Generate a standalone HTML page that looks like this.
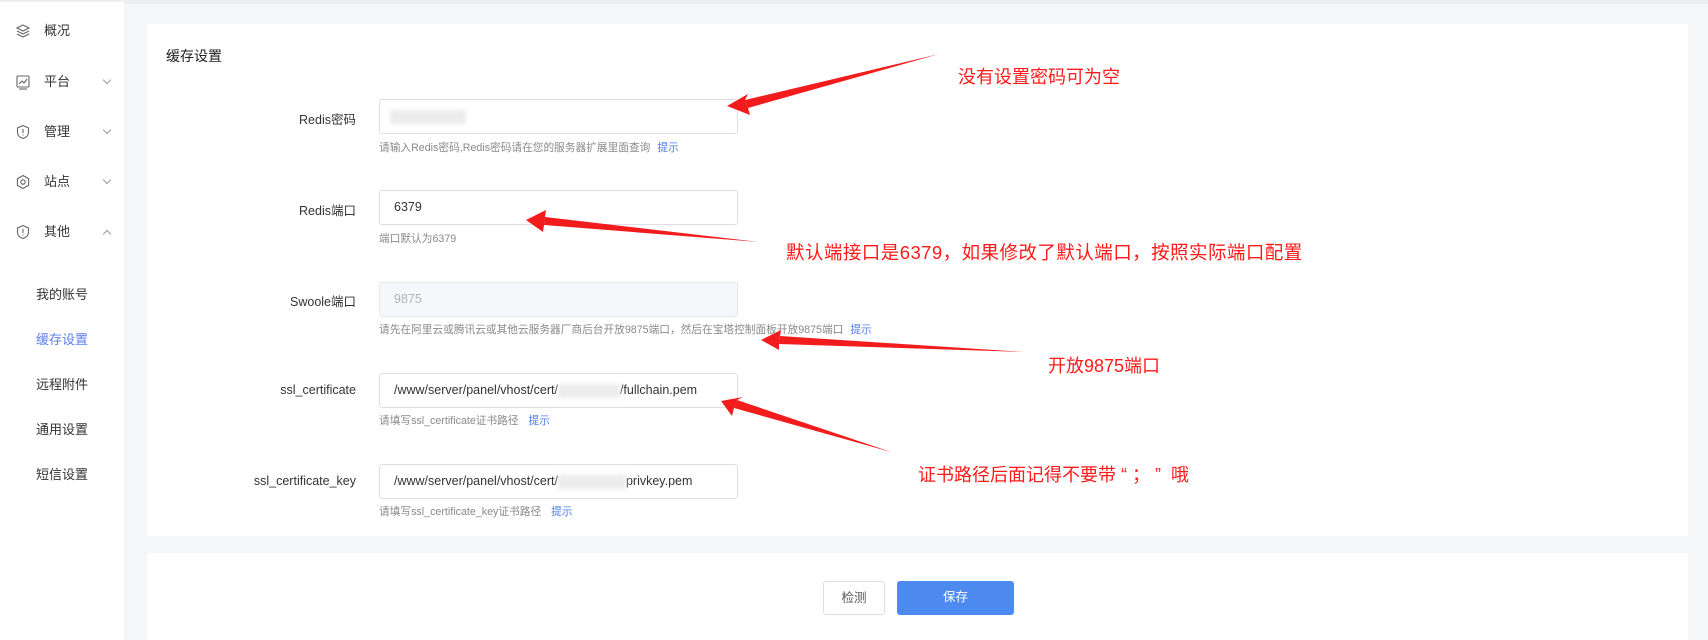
<!DOCTYPE html>
<html><head><meta charset="utf-8"><style>
*{margin:0;padding:0;box-sizing:border-box}
body{width:1708px;height:640px;overflow:hidden;background:#f5f6f8;font-family:"Liberation Sans","Noto Sans CJK SC",sans-serif;position:relative;color:#333}
.side{position:absolute;left:0;top:0;width:124px;height:640px;background:#fff;border-top:2px solid #eee}
.topline{position:absolute;left:124px;top:0;width:1584px;height:4px;background:#eceef1}
.si{position:absolute;left:0;font-size:13px;color:#333;line-height:16px}
.si svg{position:absolute;left:15px;top:0}
.si span{position:absolute;left:44px;white-space:nowrap}
.si i{position:absolute;left:104px;top:3px;width:6px;height:6px;border-right:1px solid #999;border-bottom:1px solid #999;transform:rotate(45deg)}
.si i.up{transform:rotate(-135deg);top:7px}
.sub{position:absolute;left:36px;font-size:13px;color:#333;white-space:nowrap}
.card{position:absolute;background:#fff}
.title{position:absolute;left:166px;top:46px;font-size:14px;color:#222}
.lbl{position:absolute;width:356px;left:0;text-align:right;font-size:12.5px;color:#333}
.inp{position:absolute;left:379px;width:359px;height:35px;border:1px solid #dcdfe6;border-radius:3px;background:#fff;font-size:12.5px;line-height:33px;padding-left:14px;color:#333;white-space:nowrap}
.inp.dis{background:#f5f7fa;color:#b0b3b8;border-color:#e4e7ed}
.hint{position:absolute;left:379px;font-size:10.7px;color:#8a8a8a;white-space:nowrap}
.hint b{font-weight:normal;color:#4d7ef0;margin-left:4px}
.blur{display:inline-block;vertical-align:middle;height:14px;background:#ececec;filter:blur(2px)}
.red{position:absolute;color:#ff1a1a;font-size:18px;white-space:nowrap}
.btn{position:absolute;top:581px;height:34px;border-radius:3px;font-size:12.5px;text-align:center;line-height:32px}
</style></head><body>
<div class="topline"></div>
<div class="side">
<div class="si" style="top:21px"><svg width="16" height="16" viewBox="0 0 16 16" fill="none" stroke="#666" stroke-width="1.1"><path d="M8 2L14 5L8 8L2 5Z"/><path d="M2 8L8 11L14 8"/><path d="M2 11L8 14L14 11"/></svg><span>概况</span></div>
<div class="si" style="top:72px"><svg width="16" height="16" viewBox="0 0 16 16" fill="none" stroke="#666" stroke-width="1.1"><rect x="2" y="2" width="12" height="11" rx="1"/><path d="M4 10L7 7L9 9L12 5"/><path d="M4 15H12"/></svg><span>平台</span><i></i></div>
<div class="si" style="top:122px"><svg width="16" height="16" viewBox="0 0 16 16" fill="none" stroke="#666" stroke-width="1.1"><path d="M8 1.5L13.5 4V8.5C13.5 11.5 11 13.5 8 14.5C5 13.5 2.5 11.5 2.5 8.5V4Z"/><path d="M8 5V9M8 10.5V11.5"/></svg><span>管理</span><i></i></div>
<div class="si" style="top:172px"><svg width="16" height="16" viewBox="0 0 16 16" fill="none" stroke="#666" stroke-width="1.1"><path d="M8 1.5L13.6 4.75V11.25L8 14.5L2.4 11.25V4.75Z"/><circle cx="8" cy="8" r="2.2"/></svg><span>站点</span><i></i></div>
<div class="si" style="top:222px"><svg width="16" height="16" viewBox="0 0 16 16" fill="none" stroke="#666" stroke-width="1.1"><path d="M8 1.5L13.5 4V8.5C13.5 11.5 11 13.5 8 14.5C5 13.5 2.5 11.5 2.5 8.5V4Z"/><path d="M8 5V9M8 10.5V11.5"/></svg><span>其他</span><i class="up"></i></div>
<div class="sub" style="top:282px">我的账号</div>
<div class="sub" style="top:327px;color:#5b7ff0">缓存设置</div>
<div class="sub" style="top:372px">远程附件</div>
<div class="sub" style="top:417px">通用设置</div>
<div class="sub" style="top:462px">短信设置</div>
</div>
<div class="card" style="left:147px;top:24px;width:1541px;height:512px"></div>
<div class="card" style="left:147px;top:553px;width:1541px;height:87px"></div>
<div class="title">缓存设置</div>

<div class="lbl" style="top:109px">Redis密码</div>
<div class="inp" style="top:99px"><span class="blur" style="width:76px;margin-left:-4px"></span></div>
<div class="hint" style="top:140px">请输入Redis密码,Redis密码请在您的服务器扩展里面查询 <b>提示</b></div>

<div class="lbl" style="top:200px">Redis端口</div>
<div class="inp" style="top:190px">6379</div>
<div class="hint" style="top:231px">端口默认为6379</div>

<div class="lbl" style="top:291px">Swoole端口</div>
<div class="inp dis" style="top:282px">9875</div>
<div class="hint" style="top:322px">请先在阿里云或腾讯云或其他云服务器厂商后台开放9875端口，然后在宝塔控制面板开放9875端口 <b>提示</b></div>

<div class="lbl" style="top:383px">ssl_certificate</div>
<div class="inp" style="top:373px">/www/server/panel/vhost/cert/<span class="blur" style="width:62px"></span>/fullchain.pem</div>
<div class="hint" style="top:413px">请填写ssl_certificate证书路径 &nbsp;<b>提示</b></div>

<div class="lbl" style="top:474px">ssl_certificate_key</div>
<div class="inp" style="top:464px">/www/server/panel/vhost/cert/<span class="blur" style="width:68px"></span>privkey.pem</div>
<div class="hint" style="top:504px">请填写ssl_certificate_key证书路径 &nbsp;<b>提示</b></div>

<div class="btn" style="left:823px;width:62px;border:1px solid #dcdfe6;background:#fff;color:#555">检测</div>
<div class="btn" style="left:897px;width:117px;background:#4d8af0;color:#fff">保存</div>

<svg style="position:absolute;left:0;top:0" width="1708" height="640">
<g fill="#f21c1c">
<polygon points="939,54 745,100 748,108"/><polygon points="727,106 748,94 745,100 748,108 750,115"/>
<polygon points="759,242 545,217 544,225"/><polygon points="526,220 546,210 545,217 544,225 543,232"/>
<polygon points="1024,352 780,336 779,344"/><polygon points="761,340 781,330 780,336 779,344 779,350"/>
<polygon points="891,452 737,400 734,408"/><polygon points="721,401 743,397 737,400 734,408 732,416"/>
</g>
</svg>
<div class="red" style="left:958px;top:63px">没有设置密码可为空</div>
<div class="red" style="left:786px;top:239px;font-size:18.5px;letter-spacing:0.45px">默认端接口是6379，如果修改了默认端口，按照实际端口配置</div>
<div class="red" style="left:1048px;top:352px">开放9875端口</div>
<div class="red" style="left:918px;top:461px">证书路径后面记得不要带&nbsp;“&nbsp;；&nbsp;”&nbsp;&nbsp;哦</div>
</body></html>
